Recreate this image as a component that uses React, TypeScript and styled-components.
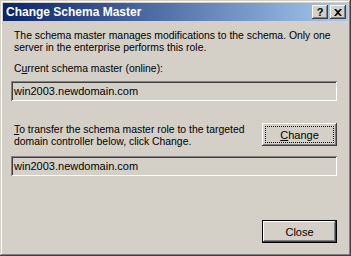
import React from "react";
import styled, { createGlobalStyle, css } from "styled-components";

const GlobalStyle = createGlobalStyle`
  html, body {
    margin: 0;
    padding: 0;
    background: #d4d0c8;
  }
`;

const face = "#d4d0c8";

const raised = css`
  box-shadow: inset -1px -1px 0 #404040, inset 1px 1px 0 #ffffff,
    inset -2px -2px 0 #808080, inset 2px 2px 0 ${face};
`;

const sunken = css`
  box-shadow: inset 1px 1px 0 #808080, inset -1px -1px 0 #ffffff,
    inset 2px 2px 0 #404040, inset -2px -2px 0 ${face};
`;

const Window = styled.div`
  width: 351px;
  height: 256px;
  box-sizing: border-box;
  padding: 3px;
  background: ${face};
  display: flex;
  flex-direction: column;
  font-family: "Liberation Sans", Arial, sans-serif;
  font-size: 10.4px;
  color: #000;
  box-shadow: inset -1px -1px 0 #404040, inset 1px 1px 0 ${face},
    inset -2px -2px 0 #808080, inset 2px 2px 0 #ffffff;
`;

const TitleBar = styled.div`
  height: 18px;
  display: flex;
  align-items: center;
  padding: 0 2px 0 3px;
  background: linear-gradient(to right, #0a246a, #a6caf0);
`;

const Title = styled.span`
  flex: 1;
  color: #fff;
  font-weight: bold;
  font-size: 12px;
  white-space: nowrap;
`;

const CaptionButton = styled.div<{ $gap?: boolean }>`
  width: 16px;
  height: 14px;
  box-sizing: border-box;
  background: ${face};
  ${raised};
  display: flex;
  align-items: center;
  justify-content: center;
  margin-left: ${(p) => (p.$gap ? "2px" : "0")};
  font-weight: bold;
  font-size: 11px;
  line-height: 14px;
`;

const Body = styled.div`
  flex: 1;
  display: flex;
  flex-direction: column;
  padding: 8px 11px 10px 8px;
  margin-top: 1px;
`;

const Text = styled.div<{ $top?: number }>`
  line-height: 12px;
  padding-left: 3px;
  white-space: nowrap;
  margin-top: ${(p) => p.$top ?? 0}px;
`;

const Field = styled.div<{ $top: number }>`
  height: 20px;
  box-sizing: border-box;
  ${sunken};
  margin-top: ${(p) => p.$top}px;
  padding: 0 3px;
  display: flex;
  align-items: center;
  font-size: 11px;
`;

const Row = styled.div`
  display: flex;
  justify-content: space-between;
  align-items: flex-start;
  margin-top: 22px;
`;

const Button = styled.div<{ $default?: boolean; $focus?: boolean }>`
  width: 75px;
  height: 23px;
  box-sizing: border-box;
  position: relative;
  display: flex;
  align-items: center;
  justify-content: center;
  font-size: 11px;
  ${(p) =>
    p.$default
      ? css`
          box-shadow: inset 0 0 0 1px #000, inset -2px -2px 0 #404040,
            inset 2px 2px 0 #ffffff, inset -3px -3px 0 #808080;
        `
      : raised};
  ${(p) =>
    p.$focus &&
    css`
      &::after {
        content: "";
        position: absolute;
        inset: 3px;
        border: 1px dotted #000;
      }
    `}
`;

const Footer = styled.div`
  margin-top: auto;
  display: flex;
  justify-content: flex-end;
`;

const U = styled.span`
  text-decoration: underline;
`;

export default function App() {
  return (
    <>
      <GlobalStyle />
      <Window>
        <TitleBar>
          <Title>Change Schema Master</Title>
          <CaptionButton>?</CaptionButton>
          <CaptionButton $gap>
            <svg width="8" height="7" viewBox="0 0 8 7">
              <path d="M0 0h2l2 2 2-2h2L5 3.5 8 7H6L4 5 2 7H0l3-3.5z" fill="#000" />
            </svg>
          </CaptionButton>
        </TitleBar>
        <Body>
          <Text>
            The schema master manages modifications to the schema. Only one
            <br />
            server in the enterprise performs this role.
          </Text>
          <Text $top={9}>
            C<U>u</U>rrent schema master (online):
          </Text>
          <Field $top={6}>win2003.newdomain.com</Field>
          <Row>
            <Text $top={1}>
              <U>T</U>o transfer the schema master role to the targeted
              <br />
              domain controller below, click Change.
            </Text>
            <Button $focus>
              <span>
                <U>C</U>hange
              </span>
            </Button>
          </Row>
          <Field $top={8}>win2003.newdomain.com</Field>
          <Footer>
            <Button $default>Close</Button>
          </Footer>
        </Body>
      </Window>
    </>
  );
}
